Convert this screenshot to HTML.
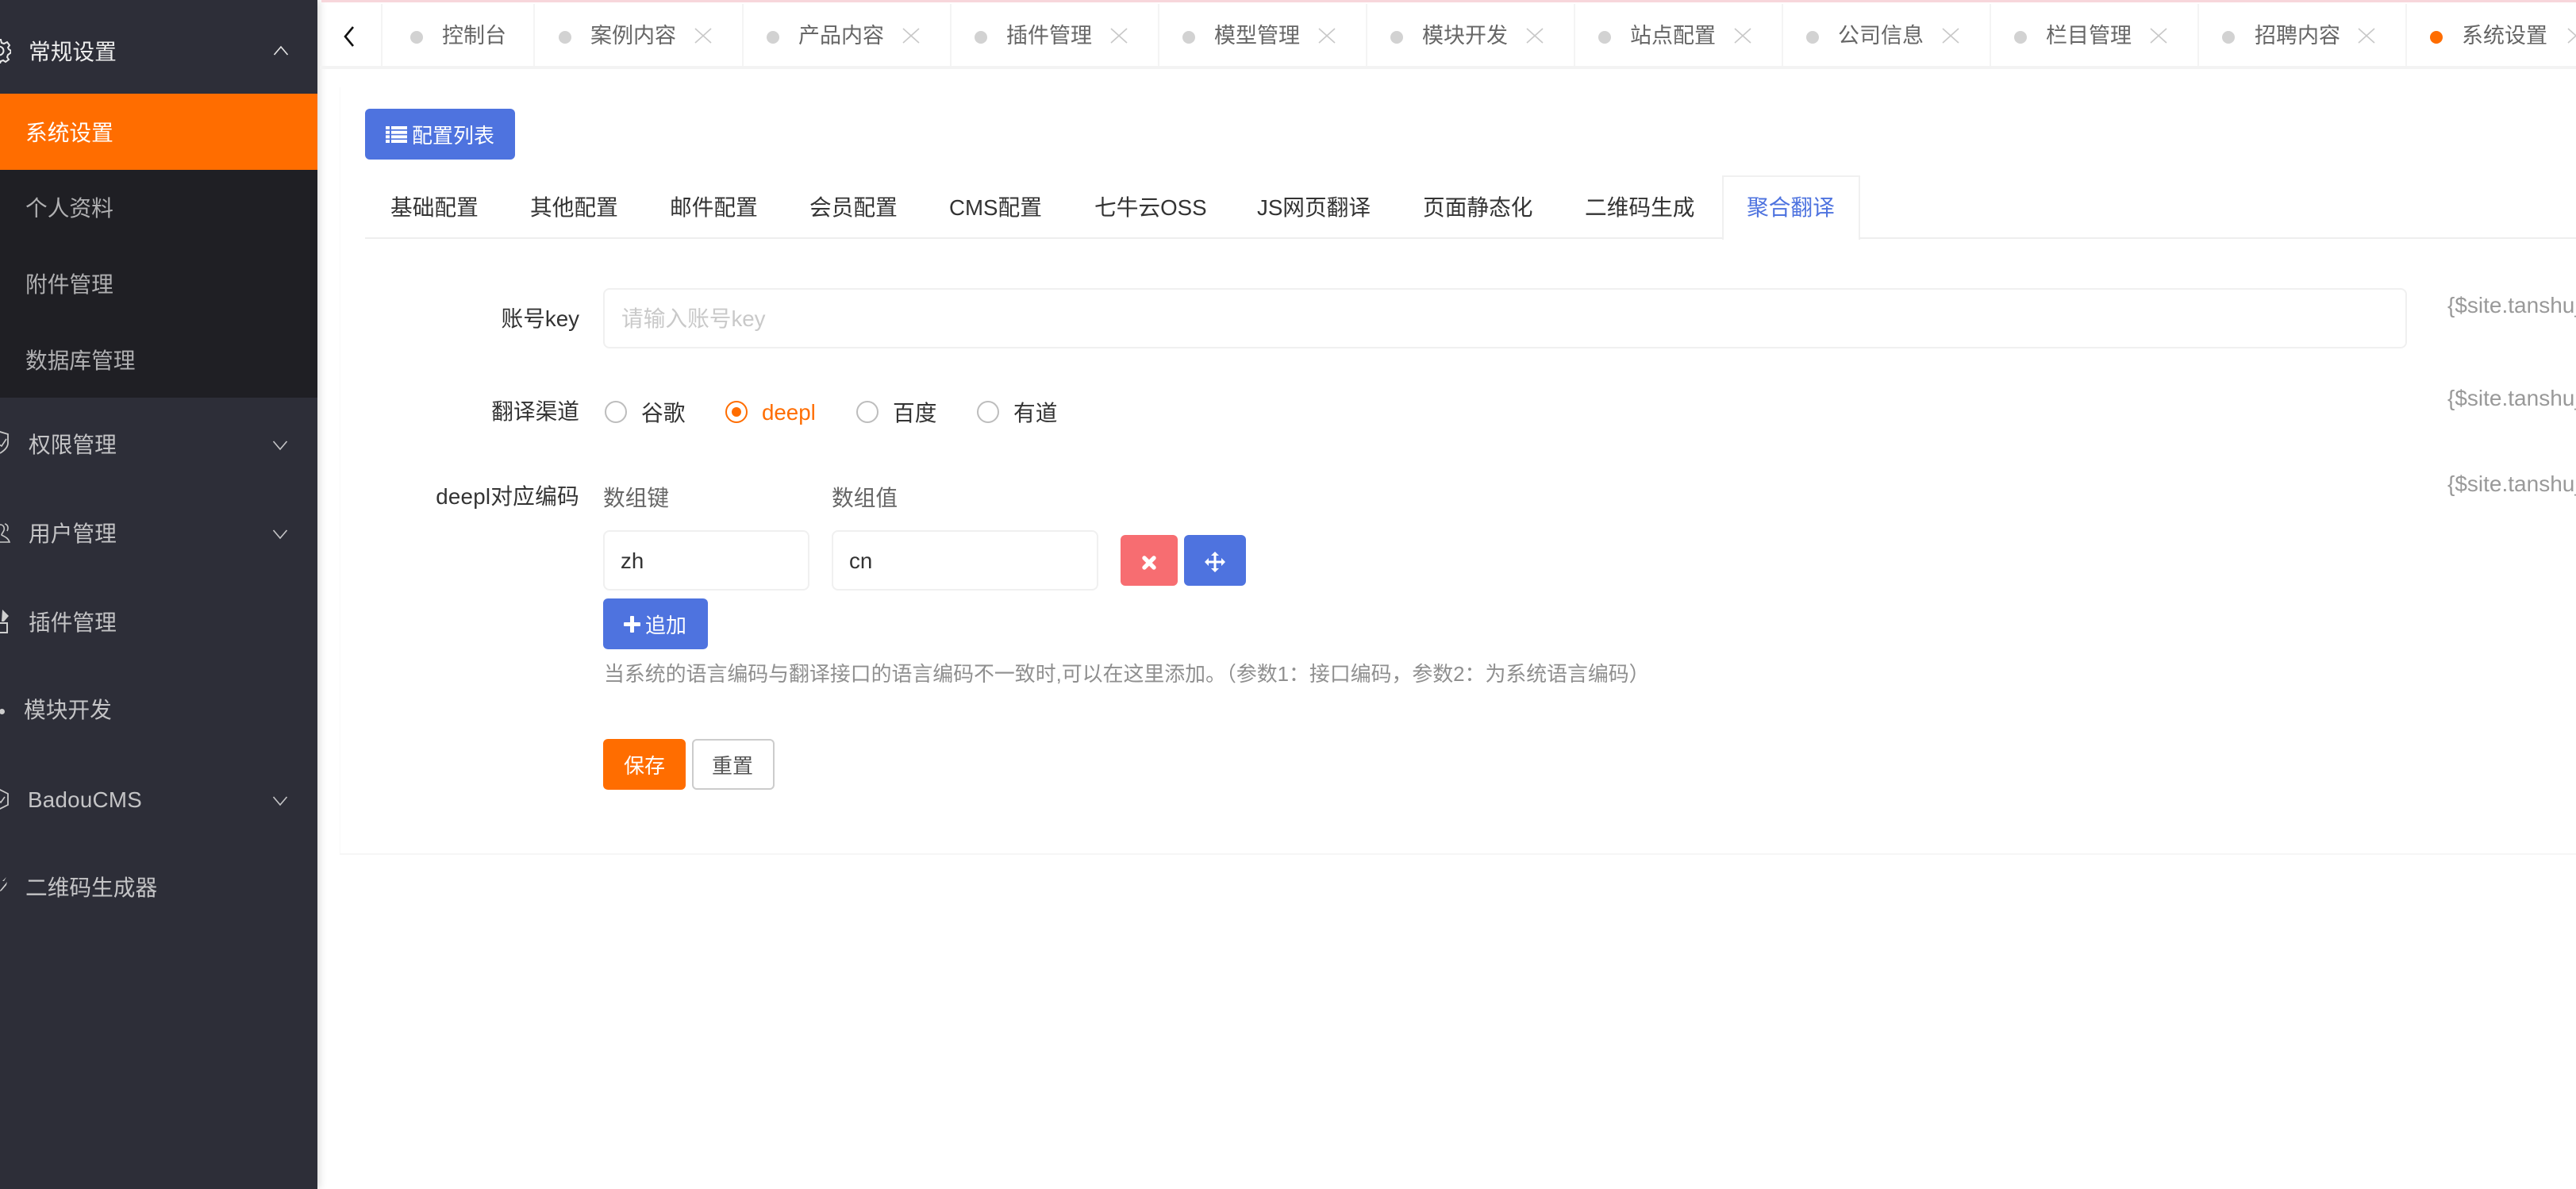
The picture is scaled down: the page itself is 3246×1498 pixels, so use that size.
<!DOCTYPE html>
<html lang="zh">
<head>
<meta charset="utf-8">
<title>系统设置</title>
<style>
html,body{margin:0;padding:0;width:3246px;height:1498px;overflow:hidden;background:#fff}
body{position:relative;font-family:"Liberation Sans","Noto Sans CJK SC",sans-serif;font-size:27.7px;color:#333}
div,span,svg{position:absolute;box-sizing:border-box}
.t{white-space:nowrap;height:40px;line-height:40px}
.side{left:0;top:0;width:400px;height:1498px;background:#2d2e38;box-shadow:2px 0 10px rgba(0,0,0,.16)}
.s{color:#c4c4c6}
.sub{color:#b0b0b2}
.sep{top:5px;height:78px;width:2px;background:#f4f4f4}
.dot{width:16px;height:16px;border-radius:50%;background:#d2d2d2;top:39px}
.tab{color:#666;top:25px;font-size:27px}
.cl{top:35px;width:22px;height:20px}
.tb{color:#333;top:242px}
.lbl{color:#333;text-align:right;right:2516px}
.inp{background:#fff;border:2px solid #f0f0f0;border-radius:8px}
.rad{width:28px;height:28px;border-radius:50%;border:2px solid #bdbdbd;top:505px}
.btn{border-radius:6px}
.tag{color:#999;font-size:28px;left:3084px}
</style>
</head>
<body>
<!-- sidebar -->
<div class="side"></div>
<div style="left:0;top:118px;width:400px;height:96px;background:#ff6d00"></div>
<div style="left:0;top:214px;width:400px;height:287px;background:#1f1f24"></div>

<svg style="left:0;top:48px" width="14" height="32" viewBox="0 0 14 32" fill="none" stroke="#e8e8e8" stroke-width="2"><path d="M-6 2H1l1 4 3 1 4-2 3 4-2 3 1 2 3 2-1 3-3 2-1 3 2 3-4 3-3-2-3 1-1 3H-6"/><circle cx="-1" cy="16" r="5.500"/></svg>
<div class="t" style="left:36px;top:46px;color:#eee">常规设置</div>
<svg style="left:344px;top:57px" width="20" height="14" viewBox="0 0 20 14" fill="none" stroke="#e4e4e4" stroke-width="1.600"><path d="M1.500 12L10 2l8.500 10"/></svg>
<div class="t" style="left:32px;top:148px;color:#fff">系统设置</div>
<div class="t sub" style="left:32px;top:243px">个人资料</div>
<div class="t sub" style="left:32px;top:339px">附件管理</div>
<div class="t sub" style="left:32px;top:435px">数据库管理</div>

<svg style="left:0;top:543px" width="12" height="30" viewBox="0 0 12 30" fill="none" stroke="#c8c8c8" stroke-width="1.800"><path d="M-10 4L0 1l10 3v11c0 6-5 10-10 13"/><path d="M-1 17l3 2 6-9" stroke-width="1.600"/></svg>
<div class="t s" style="left:36px;top:541px">权限管理</div>
<svg style="left:343px;top:554px" width="20" height="14" viewBox="0 0 20 14" fill="none" stroke="#c4c4c6" stroke-width="1.600"><path d="M1.500 2L10 12l8.500-10"/></svg>

<svg style="left:0;top:659px" width="14" height="26" viewBox="0 0 14 26" fill="none" stroke="#c8c8c8" stroke-width="1.600"><path d="M0 2c4 0 6 3 5 7-1 3-3 4-3 6 3 2 8 3 10 9H-2"/><path d="M6 1c4 1 5 5 3 9"/></svg>
<div class="t s" style="left:36px;top:653px">用户管理</div>
<svg style="left:343px;top:666px" width="20" height="14" viewBox="0 0 20 14" fill="none" stroke="#c4c4c6" stroke-width="1.600"><path d="M1.500 2L10 12l8.500-10"/></svg>

<svg style="left:0;top:767px" width="14" height="32" viewBox="0 0 14 32"><path d="M3 1l8 8-6 7H2z" fill="#cfcfcf"/><path d="M-2 18h11v12H-2z" fill="none" stroke="#cfcfcf" stroke-width="2"/></svg>
<div class="t s" style="left:36px;top:765px">插件管理</div>

<div style="left:-1px;top:893px;width:7px;height:7px;border-radius:50%;background:#ccc"></div>
<div class="t s" style="left:30px;top:875px">模块开发</div>

<svg style="left:0;top:992px" width="12" height="30" viewBox="0 0 12 30" fill="none" stroke="#c8c8c8" stroke-width="1.800"><path d="M-2 2l12 6v14L-2 28"/><path d="M-1 17l2 2 5-7" stroke-width="1.600"/></svg>
<div class="t s" style="left:35px;top:988px;letter-spacing:.3px">BadouCMS</div>
<svg style="left:343px;top:1002px" width="20" height="14" viewBox="0 0 20 14" fill="none" stroke="#c4c4c6" stroke-width="1.600"><path d="M1.500 2L10 12l8.500-10"/></svg>

<svg style="left:0;top:1104px" width="10" height="24" viewBox="0 0 10 24"><path d="M8 1L3 6h2z M9 7L0 18l-2 2 4-2L8 11z" fill="#d0d0d0"/></svg>
<div class="t s" style="left:32px;top:1099px">二维码生成器</div>

<!-- top bar -->
<div style="left:405px;top:0;width:2841px;height:3px;background:#f7d6db"></div>
<div style="left:403px;top:83px;width:2843px;height:4px;background:#f3f3f3"></div>
<svg style="left:431px;top:32px" width="18" height="28" viewBox="0 0 18 28" fill="none" stroke="#111" stroke-width="2.600"><path d="M14 2L4 14l10 12"/></svg>

<div class="sep" style="left:480px"></div>
<div class="dot" style="left:517px"></div>
<div class="t tab" style="left:557px">控制台</div>

<div class="sep" style="left:672px"></div>
<div class="dot" style="left:704px"></div>
<div class="t tab" style="left:744px">案例内容</div>
<svg class="cl" style="left:875px" viewBox="0 0 22 20" fill="none" stroke="#c8c8c8" stroke-width="1.600"><path d="M1 1l20 18M21 1L1 19"/></svg>

<div class="sep" style="left:935px"></div>
<div class="dot" style="left:966px"></div>
<div class="t tab" style="left:1006px">产品内容</div>
<svg class="cl" style="left:1137px" viewBox="0 0 22 20" fill="none" stroke="#c8c8c8" stroke-width="1.600"><path d="M1 1l20 18M21 1L1 19"/></svg>

<div class="sep" style="left:1197px"></div>
<div class="dot" style="left:1228px"></div>
<div class="t tab" style="left:1268px">插件管理</div>
<svg class="cl" style="left:1399px" viewBox="0 0 22 20" fill="none" stroke="#c8c8c8" stroke-width="1.600"><path d="M1 1l20 18M21 1L1 19"/></svg>

<div class="sep" style="left:1459px"></div>
<div class="dot" style="left:1490px"></div>
<div class="t tab" style="left:1530px">模型管理</div>
<svg class="cl" style="left:1661px" viewBox="0 0 22 20" fill="none" stroke="#c8c8c8" stroke-width="1.600"><path d="M1 1l20 18M21 1L1 19"/></svg>

<div class="sep" style="left:1721px"></div>
<div class="dot" style="left:1752px"></div>
<div class="t tab" style="left:1792px">模块开发</div>
<svg class="cl" style="left:1923px" viewBox="0 0 22 20" fill="none" stroke="#c8c8c8" stroke-width="1.600"><path d="M1 1l20 18M21 1L1 19"/></svg>

<div class="sep" style="left:1983px"></div>
<div class="dot" style="left:2014px"></div>
<div class="t tab" style="left:2054px">站点配置</div>
<svg class="cl" style="left:2185px" viewBox="0 0 22 20" fill="none" stroke="#c8c8c8" stroke-width="1.600"><path d="M1 1l20 18M21 1L1 19"/></svg>

<div class="sep" style="left:2245px"></div>
<div class="dot" style="left:2276px"></div>
<div class="t tab" style="left:2316px">公司信息</div>
<svg class="cl" style="left:2447px" viewBox="0 0 22 20" fill="none" stroke="#c8c8c8" stroke-width="1.600"><path d="M1 1l20 18M21 1L1 19"/></svg>

<div class="sep" style="left:2507px"></div>
<div class="dot" style="left:2538px"></div>
<div class="t tab" style="left:2578px">栏目管理</div>
<svg class="cl" style="left:2709px" viewBox="0 0 22 20" fill="none" stroke="#c8c8c8" stroke-width="1.600"><path d="M1 1l20 18M21 1L1 19"/></svg>

<div class="sep" style="left:2769px"></div>
<div class="dot" style="left:2800px"></div>
<div class="t tab" style="left:2841px">招聘内容</div>
<svg class="cl" style="left:2971px" viewBox="0 0 22 20" fill="none" stroke="#c8c8c8" stroke-width="1.600"><path d="M1 1l20 18M21 1L1 19"/></svg>

<div class="sep" style="left:3031px"></div>
<div class="dot" style="left:3062px;background:#ff6d00"></div>
<div class="t tab" style="left:3102px">系统设置</div>
<svg class="cl" style="left:3235px" viewBox="0 0 22 20" fill="none" stroke="#c8c8c8" stroke-width="1.600"><path d="M1 1l20 18M21 1L1 19"/></svg>

<!-- card -->
<div style="left:428px;top:110px;width:2818px;height:967px;border-left:1px solid #f8f8f8;border-bottom:2px solid #f6f6f6"></div>

<div class="btn" style="left:460px;top:137px;width:189px;height:64px;background:#4e73df"></div>
<svg style="left:486px;top:159px" width="27" height="21" viewBox="0 0 27 21" fill="#fff"><path d="M0 0h5v4H0zM7 0h20v4H7zM0 5.700h5v4H0zM7 5.700h20v4H7zM0 11.400h5v4H0zM7 11.400h20v4H7zM0 17h5v4H0zM7 17h20v4H7z"/></svg>
<div class="t" style="left:519px;top:151px;color:#fff;font-size:26px">配置列表</div>

<!-- tabs -->
<div style="left:460px;top:299px;width:2786px;height:2px;background:#eee"></div>
<div style="left:2170px;top:221px;width:174px;height:81px;background:#fff;border:2px solid #f0f0f0;border-bottom:none"></div>
<div class="t tb" style="left:492px">基础配置</div>
<div class="t tb" style="left:668px">其他配置</div>
<div class="t tb" style="left:844px">邮件配置</div>
<div class="t tb" style="left:1020px">会员配置</div>
<div class="t tb" style="left:1196px">CMS配置</div>
<div class="t tb" style="left:1379px">七牛云OSS</div>
<div class="t tb" style="left:1584px">JS网页翻译</div>
<div class="t tb" style="left:1793px">页面静态化</div>
<div class="t tb" style="left:1997px">二维码生成</div>
<div class="t tb" style="left:2201px;color:#4e73df">聚合翻译</div>

<!-- row 1 -->
<div class="t lbl" style="top:382px">账号key</div>
<div class="inp" style="left:760px;top:363px;width:2273px;height:76px"></div>
<div class="t" style="left:783px;top:382px;color:#c9c9c9">请输入账号key</div>
<div class="t tag" style="top:365px">{$site.tanshu_key}</div>

<!-- row 2 -->
<div class="t lbl" style="top:499px">翻译渠道</div>
<div class="rad" style="left:762px"></div>
<div class="t" style="left:808px;top:501px">谷歌</div>
<div class="rad" style="left:914px;border-color:#ff6d00"></div>
<div style="left:922px;top:513px;width:12px;height:12px;border-radius:50%;background:#ff6d00"></div>
<div class="t" style="left:960px;top:500px;color:#ff6d00">deepl</div>
<div class="rad" style="left:1079px"></div>
<div class="t" style="left:1125px;top:501px">百度</div>
<div class="rad" style="left:1231px"></div>
<div class="t" style="left:1277px;top:501px">有道</div>
<div class="t tag" style="top:482px">{$site.tanshu_key}</div>

<!-- row 3 -->
<div class="t lbl" style="top:606px;letter-spacing:.25px">deepl对应编码</div>
<div class="t" style="left:760px;top:608px;color:#666">数组键</div>
<div class="t" style="left:1048px;top:608px;color:#666">数组值</div>
<div class="t tag" style="top:590px">{$site.tanshu_key}</div>

<div class="inp" style="left:760px;top:668px;width:260px;height:76px"></div>
<div class="t" style="left:782px;top:687px">zh</div>
<div class="inp" style="left:1048px;top:668px;width:336px;height:76px"></div>
<div class="t" style="left:1070px;top:687px">cn</div>

<div class="btn" style="left:1412px;top:674px;width:72px;height:64px;background:#f76d71"></div>
<svg style="left:1439px;top:700px" width="18" height="18" viewBox="0 0 18 18" fill="none" stroke="#fff" stroke-width="5.400" stroke-linecap="round"><path d="M3 3l12 12M15 3L3 15"/></svg>
<div class="btn" style="left:1492px;top:674px;width:78px;height:64px;background:#4e73df"></div>
<svg style="left:1518px;top:695px" width="26" height="26" viewBox="0 0 26 26" fill="#fff"><path d="M13 0l5 5h-3.500v6.500H21V8l5 5-5 5v-3.500h-6.500V21H18l-5 5-5-5h3.500v-6.500H5V18l-5-5 5-5v3.500h6.500V5H8z"/></svg>

<div class="btn" style="left:760px;top:754px;width:132px;height:64px;background:#4e73df"></div>
<svg style="left:786px;top:776px" width="21" height="21" viewBox="0 0 21 21" fill="#fff"><path d="M8 1a1 1 0 0 1 1-1h3a1 1 0 0 1 1 1v7h7a1 1 0 0 1 1 1v3a1 1 0 0 1-1 1h-7v7a1 1 0 0 1-1 1H9a1 1 0 0 1-1-1v-7H1a1 1 0 0 1-1-1V9a1 1 0 0 1 1-1h7z"/></svg>
<div class="t" style="left:813px;top:768px;color:#fff;font-size:26px">追加</div>

<div class="t" style="left:761px;top:830px;color:#8f8f8f;font-size:25.900px">当系统的语言编码与翻译接口的语言编码不一致时,可以在这里添加。（参数1：接口编码，参数2：为系统语言编码）</div>

<div class="btn" style="left:760px;top:931px;width:104px;height:64px;background:#ff6d00"></div>
<div class="t" style="left:786px;top:945px;color:#fff;font-size:26px">保存</div>
<div class="btn" style="left:872px;top:931px;width:104px;height:64px;background:#fff;border:2px solid #ccc"></div>
<div class="t" style="left:897px;top:945px;color:#555;font-size:26px">重置</div>
</body>
</html>
